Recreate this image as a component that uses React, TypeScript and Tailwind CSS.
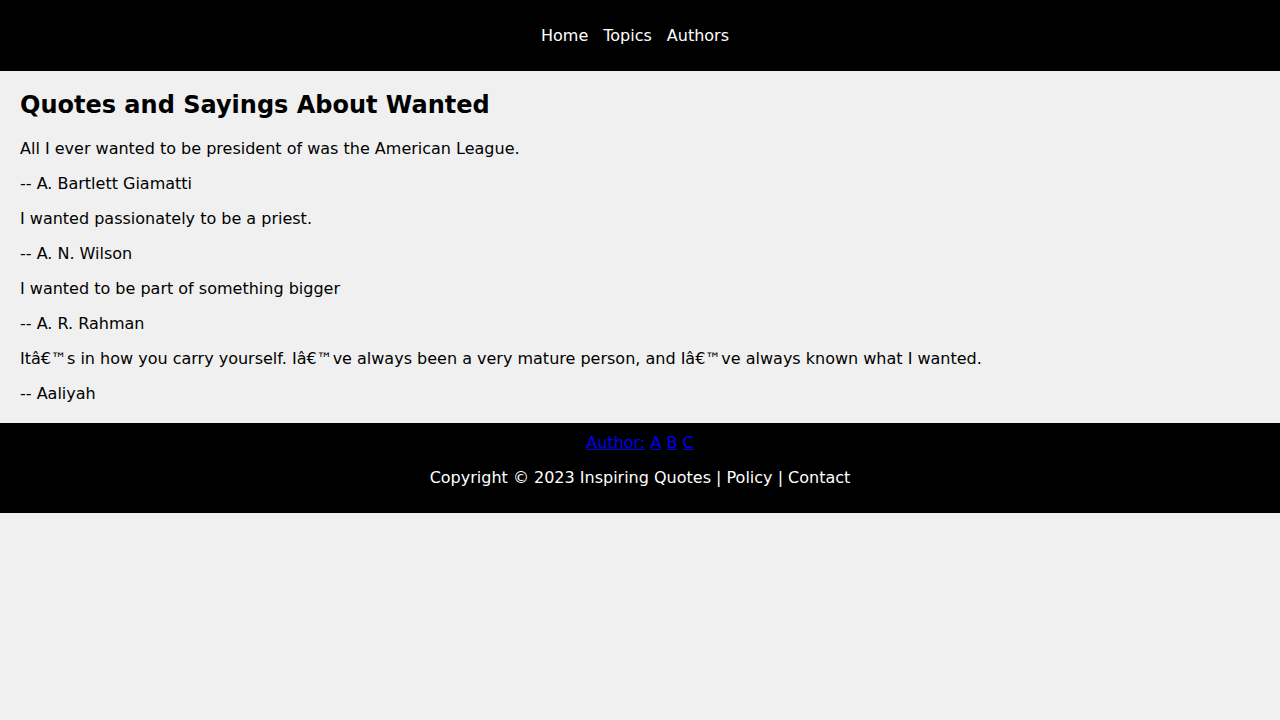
export default function App() {
  const items = [
    "All I ever wanted to be president of was the American League.",
    "-- A. Bartlett Giamatti",
    "I wanted passionately to be a priest.",
    "-- A. N. Wilson",
    "I wanted to be part of something bigger",
    "-- A. R. Rahman",
    "Itâ€™s in how you carry yourself. Iâ€™ve always been a very mature person, and Iâ€™ve always known what I wanted.",
    "-- Aaliyah",
  ];
  return (
    <div className="min-h-[720px] bg-[#f0f0f0] text-black text-[16px]" style={{ fontFamily: '"DejaVu Sans", sans-serif' }}>
      <header className="bg-black py-[10px]">
        <nav className="my-4 flex justify-center gap-[15px] pl-0 pr-[10px] leading-[19px] text-white">
          <a>Home</a>
          <a>Topics</a>
          <a>Authors</a>
        </nav>
      </header>
      <main className="px-5 pt-5 pb-5">
        <h1 className="m-0 mb-5 text-[24px] font-bold leading-[28px]">Quotes and Sayings About Wanted</h1>
        <div className="flex flex-col gap-4">
          {items.map((t, i) => (
            <p key={i} className="leading-[19px]">{t}</p>
          ))}
        </div>
      </main>
      <footer className="bg-black pt-[10px] pb-[10px] text-center leading-[19px]">
        <div>
          <a className="text-[#0000ee] underline">Author:</a>{" "}
          <a className="text-[#0000ee] underline">A</a>{" "}
          <a className="text-[#0000ee] underline">B</a>{" "}
          <a className="text-[#0000ee] underline">C</a>
        </div>
        <p className="my-4 text-white">Copyright © 2023 Inspiring Quotes | Policy | Contact</p>
      </footer>
    </div>
  );
}
